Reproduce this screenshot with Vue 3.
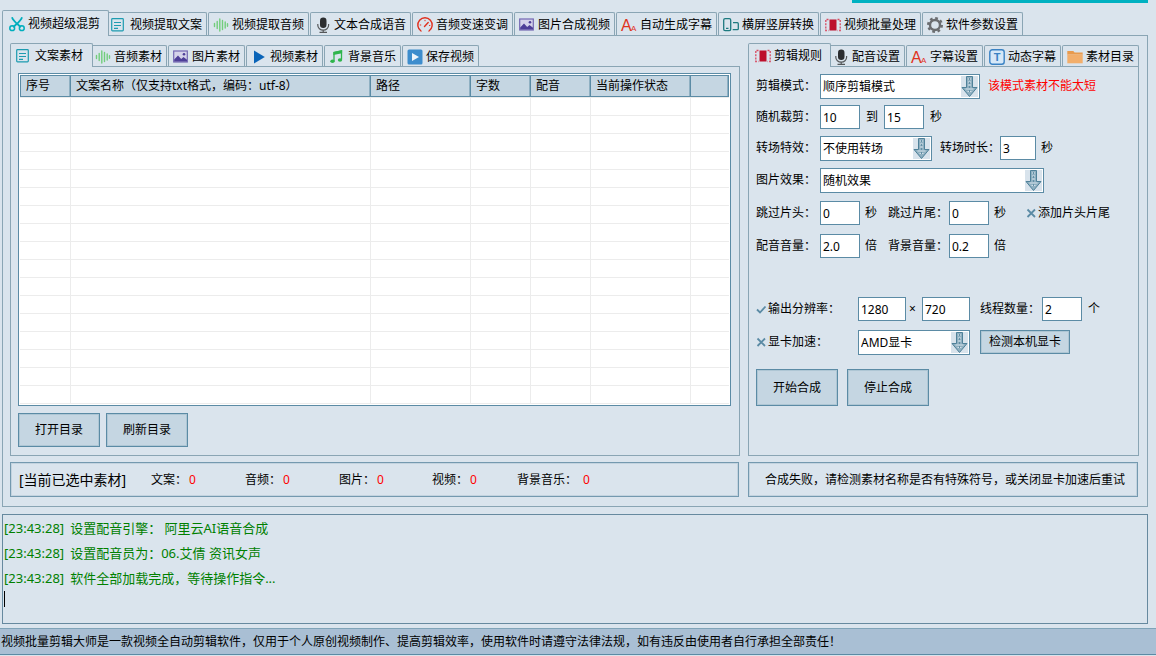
<script setup>
import { ref, reactive } from 'vue'

const icons = {
  scissors:
    '<g fill="none" stroke="#00aebd" stroke-width="1.5"><path d="M3 1.2C4 5 8 7.500 12 11.200M13 1.2C12 5 8 7.500 4 11.200" stroke-width="1.800"/><circle cx="3.200" cy="12.200" r="2.400"/><circle cx="12.800" cy="12.200" r="2.400"/></g>',
  doc:
    '<g fill="none" stroke="#1d9bb0" stroke-width="1.200"><rect x="0.700" y="1.700" width="11.600" height="12.200" rx="0.800"/><path d="M3 5.500h7M3 8.500h7M3 11.300h4"/></g>',
  wave:
    '<g stroke="#72cd7c" stroke-width="1.400" stroke-linecap="round"><path d="M1.500 6.500v3M4.200 4.500v7M6.800 2v12M9.500 3.500v9M12.200 5v6M14.500 6.800v2.400"/></g>',
  mic:
    '<rect x="5" y="0.500" width="6.500" height="10.500" rx="3.200" fill="#2b2d2f"/><path d="M2.800 7v1.200a5.400 5 0 0 0 10.800 0V7M8.200 13v2M4.500 15.300h7.500" fill="none" stroke="#55585a" stroke-width="1.200"/>',
  gauge:
    '<g fill="none" stroke="#e0301e" stroke-width="1.400" stroke-linecap="round"><path d="M4 14A7.200 7.200 0 1 1 12 14"/><path d="M7.500 9.500 11.200 5.500"/><path d="M3.200 8h.6M8 3.300v.5M12.500 8.500h.4" stroke-width="1"/></g>',
  image:
    '<rect x="0.700" y="2" width="13.600" height="11" fill="#d5d3ea" stroke="#7468b3" stroke-width="1.200"/><path d="M1.200 12.500V10.500L5 6.500l3.200 3.500 2.300-2L14 10.800v1.700z" fill="#4e3f98"/><circle cx="11" cy="5.200" r="1.300" fill="#4e3f98"/>',
  letters:
    '<g fill="#e0341f" font-family="Liberation Sans, sans-serif"><text x="0" y="14" font-size="16">A</text><text x="10" y="14" font-size="8">A</text></g>',
  rotate:
    '<g fill="none" stroke="#1d7a80" stroke-width="1.300"><rect x="0.700" y="1.600" width="7" height="12" rx="1.400"/><path d="M3 11.300h2.500M10 5.700h4.300a1 1 0 0 1 1 1v5a1 1 0 0 1-1 1H9.700"/></g>',
  film:
    '<rect x="4.500" y="2.500" width="7" height="11" fill="#bd0f2c"/><path d="M3.500 2.500H.8v11h2.700M12.500 2.500h2.700v11h-2.700" fill="none" stroke="#d84a60" stroke-width="1.300" stroke-dasharray="2 1.200"/>',
  gear:
    '<g fill="none" stroke="#6b6d70"><circle cx="8" cy="8" r="5" stroke-width="2.400"/><circle cx="8" cy="8" r="6.800" stroke-width="2.400" stroke-dasharray="2.670 2.670"/></g>',
  play: '<path d="M3 1.500 13.800 8 3 14.500z" fill="#0a64b8"/>',
  music:
    '<path d="M5 12V3.500L12.500 1.800V10.500" fill="none" stroke="#2fb54c" stroke-width="1.300"/><path d="M4.400 2.900 13.100 1.200V4.200L4.400 5.900z" fill="#2fb54c"/><ellipse cx="3.500" cy="12.200" rx="2.200" ry="1.700" fill="#2fb54c"/><ellipse cx="11" cy="11" rx="2.200" ry="1.700" fill="#2fb54c"/>',
  save:
    '<rect x="0.500" y="0.500" width="15" height="15" rx="1.500" fill="#3d8dcd"/><path d="M5 4 12 8 5 12z" fill="#eef5fb"/>',
  title:
    '<rect x="0.800" y="0.800" width="14.400" height="14.400" rx="2.500" fill="#d6e8f8" stroke="#3a82c4" stroke-width="1.400"/><text x="8" y="12" text-anchor="middle" font-size="11" font-weight="bold" font-family="Liberation Sans, sans-serif" fill="#3a82c4">T</text>',
  folder:
    '<path d="M0.300 2h6l1.300 1.600h8.100v2H.3z" fill="#e89a4d"/><path d="M0.300 5.300h15.400v9H.3z" fill="#f2ae6b"/>'
}

const mainTabs = [
  ['scissors', '视频超级混剪'],
  ['doc', '视频提取文案'],
  ['wave', '视频提取音频'],
  ['mic', '文本合成语音'],
  ['gauge', '音频变速变调'],
  ['image', '图片合成视频'],
  ['letters', '自动生成字幕'],
  ['rotate', '横屏竖屏转换'],
  ['film', '视频批量处理'],
  ['gear', '软件参数设置']
]
const materialTabs = [
  ['doc', '文案素材'],
  ['wave', '音频素材'],
  ['image', '图片素材'],
  ['play', '视频素材'],
  ['music', '背景音乐'],
  ['save', '保存视频']
]
const ruleTabs = [
  ['film', '剪辑规则'],
  ['mic', '配音设置'],
  ['letters', '字幕设置'],
  ['title', '动态字幕'],
  ['folder', '素材目录']
]
const columns = ['序号', '文案名称（仅支持txt格式，编码：utf-8）', '路径', '字数', '配音', '当前操作状态', '']
const counts = [
  ['文案：', 0],
  ['音频：', 0],
  ['图片：', 0],
  ['视频：', 0],
  ['背景音乐：', 0]
]
const logs = [
  ['[23:43:28]', '设置配音引擎： 阿里云AI语音合成'],
  ['[23:43:28]', '设置配音员为：06.艾倩 资讯女声'],
  ['[23:43:28]', '软件全部加载完成，等待操作指令...']
]

const form = reactive({
  from: '10',
  to: '15',
  duration: '3',
  head: '0',
  tail: '0',
  voice: '2.0',
  music: '0.2',
  width: '1280',
  height: '720',
  threads: '2'
})
const addClips = ref(false)
const customSize = ref(true)
const gpu = ref(false)

const arrow =
  '<rect width="17" height="21" fill="#d8e3ec"/><path d="M5.500.5h6v11H16L8.500 20.500 1 11.500h4.500z" fill="#8fb0c1" stroke="#4f8199"/><path d="M7 3h3M7 6h3M7 9h3M4.500 13h8M6.500 15.500h4" stroke="#d3e1ea"/><path d="M8.500 2v16" stroke="#628fa5" stroke-dasharray="2 2"/>'
const tick = '<path d="M1 5.500 4 8.500 9.500 2.500" fill="none" stroke="#5b8ba5" stroke-width="1.800"/>'
const cross = '<path d="M1.500 1.500 9 9M9 1.500 1.500 9" fill="none" stroke="#5b8ba5" stroke-width="1.800"/>'
</script>

<template>
  <div class="app">
    <header class="top"><div class="accent"></div></header>

    <nav class="tabs main-tabs" role="tablist">
      <button v-for="(t, i) in mainTabs" :key="t[1]" class="tab" :class="{ active: i === 0 }" role="tab" :aria-selected="i === 0">
        <svg class="icon" viewBox="0 0 16 16" aria-hidden="true" v-html="icons[t[0]]"></svg>{{ t[1] }}
      </button>
    </nav>

    <main class="workspace">
      <section class="left">
        <div class="tabs sub-tabs" role="tablist">
          <button v-for="(t, i) in materialTabs" :key="t[1]" class="tab" :class="{ active: i === 0 }" role="tab" :aria-selected="i === 0">
            <svg class="icon" viewBox="0 0 16 16" aria-hidden="true" v-html="icons[t[0]]"></svg>{{ t[1] }}
          </button>
        </div>
        <div class="panel">
          <div class="table-box">
            <table>
              <colgroup>
                <col class="c-no" /><col /><col class="c-path" /><col class="c-num" /><col class="c-num" /><col class="c-path" /><col class="c-last" />
              </colgroup>
              <thead>
                <tr><th v-for="(c, i) in columns" :key="i">{{ c }}</th></tr>
              </thead>
              <tbody>
                <tr v-for="r in 17" :key="r"><td v-for="c in 7" :key="c"></td></tr>
              </tbody>
            </table>
          </div>
          <div class="folder-actions">
            <button class="btn">打开目录</button>
            <button class="btn">刷新目录</button>
          </div>
        </div>
        <div class="status counts">
          <strong>[当前已选中素材]</strong>
          <span v-for="c in counts" :key="c[0]" class="count">{{ c[0] }}<b>{{ c[1] }}</b></span>
        </div>
      </section>

      <section class="right">
        <div class="tabs sub-tabs" role="tablist">
          <button v-for="(t, i) in ruleTabs" :key="t[1]" class="tab" :class="{ active: i === 0 }" role="tab" :aria-selected="i === 0">
            <svg class="icon" viewBox="0 0 16 16" aria-hidden="true" v-html="icons[t[0]]"></svg>{{ t[1] }}
          </button>
        </div>
        <form class="panel rules" @submit.prevent>
          <div class="group tight">
            <div class="row">
              <label class="lead" for="mode">剪辑模式：</label>
              <span class="select w160"><select id="mode"><option>顺序剪辑模式</option></select><svg viewBox="0 0 17 21" v-html="arrow"></svg></span>
              <span class="warn">该模式素材不能太短</span>
            </div>
            <div class="row">
              <label class="lead" for="from">随机裁剪：</label>
              <input id="from" v-model="form.from" class="w40" />
              <label class="mid" for="to">到</label>
              <input id="to" v-model="form.to" class="w40" />
              <span class="mid">秒</span>
            </div>
            <div class="row">
              <label class="lead" for="transition">转场特效：</label>
              <span class="select w112"><select id="transition"><option>不使用转场</option></select><svg viewBox="0 0 17 21" v-html="arrow"></svg></span>
              <label class="after" for="duration">转场时长：</label>
              <input id="duration" v-model="form.duration" class="w36" />
              <span class="unit">秒</span>
            </div>
          </div>

          <div class="group">
            <div class="row">
              <label class="lead" for="effect">图片效果：</label>
              <span class="select w224"><select id="effect"><option>随机效果</option></select><svg viewBox="0 0 17 21" v-html="arrow"></svg></span>
            </div>
            <div class="row">
              <label class="lead" for="head">跳过片头：</label>
              <input id="head" v-model="form.head" class="w40" />
              <span class="unit wide">秒</span>
              <label class="second" for="tail">跳过片尾：</label>
              <input id="tail" v-model="form.tail" class="w40" />
              <span class="unit">秒</span>
              <label class="check clips">
                <input v-model="addClips" type="checkbox" />
                <svg viewBox="0 0 11 11" v-html="addClips ? tick : cross"></svg>添加片头片尾
              </label>
            </div>
            <div class="row">
              <label class="lead" for="voice">配音音量：</label>
              <input id="voice" v-model="form.voice" class="w40" />
              <span class="unit wide">倍</span>
              <label class="second" for="bgm">背景音量：</label>
              <input id="bgm" v-model="form.music" class="w40" />
              <span class="unit">倍</span>
            </div>
          </div>

          <div class="group output">
            <div class="row">
              <label class="check lead-check">
                <input v-model="customSize" type="checkbox" />
                <svg viewBox="0 0 11 11" v-html="customSize ? tick : cross"></svg>输出分辨率：
              </label>
              <input v-model="form.width" class="w48" aria-label="宽度" />
              <span class="times">×</span>
              <input v-model="form.height" class="w48" aria-label="高度" />
              <label class="threads" for="threads">线程数量：</label>
              <input id="threads" v-model="form.threads" class="w40" />
              <span class="mid">个</span>
            </div>
            <div class="row">
              <label class="check lead-check">
                <input v-model="gpu" type="checkbox" />
                <svg viewBox="0 0 11 11" v-html="gpu ? tick : cross"></svg>显卡加速：
              </label>
              <span class="select w112"><select aria-label="显卡"><option>AMD显卡</option></select><svg viewBox="0 0 17 21" v-html="arrow"></svg></span>
              <button type="button" class="btn detect">检测本机显卡</button>
            </div>
          </div>

          <div class="run-actions">
            <button type="button" class="btn">开始合成</button>
            <button type="button" class="btn">停止合成</button>
          </div>
        </form>
        <div class="status notice">合成失败，请检测素材名称是否有特殊符号，或关闭显卡加速后重试</div>
      </section>
    </main>

    <section class="log" role="log">
      <p v-for="l in logs" :key="l[1]"><time>{{ l[0] }}</time>{{ l[1] }}</p>
      <p><span class="caret"></span></p>
    </section>

    <footer class="foot">视频批量剪辑大师是一款视频全自动剪辑软件，仅用于个人原创视频制作、提高剪辑效率，使用软件时请遵守法律法规，如有违反由使用者自行承担全部责任！</footer>
  </div>
</template>

<style>
body {
  margin: 0;
  background: #dae4ed;
}
</style>

<style scoped>
.app {
  --bg: #dae4ed;
  --line: #8aa5b4;
  --edge: #5b8ba5;
  display: flex;
  flex-direction: column;
  box-sizing: border-box;
  min-height: 100vh;
  padding-bottom: 1px;
  background: var(--bg);
  color: #000;
  font: 12px/16px "Noto Sans", "Noto Sans CJK SC", sans-serif;
}
.app *,
.app *::before {
  box-sizing: border-box;
}
button,
input,
select {
  font: inherit;
  color: inherit;
  margin: 0;
  border-radius: 0;
}
.top {
  height: 10px;
  padding: 0 8px;
}
.accent {
  width: 296px;
  height: 3px;
  margin-left: auto;
  background: #00b1c1;
}

.tabs {
  display: flex;
  align-items: flex-end;
  gap: 1px;
}
.main-tabs {
  height: 25px;
  padding-left: 2px;
}
.sub-tabs {
  height: 23px;
}
.tab {
  display: flex;
  align-items: center;
  gap: 3px;
  flex: none;
  padding: 2px 0 0 4px;
  border: 1px solid var(--line);
  border-bottom: 0;
  border-radius: 2px 2px 0 0;
  background: var(--bg);
  white-space: nowrap;
}
.main-tabs .tab {
  width: 101px;
  height: 23px;
}
.sub-tabs .tab {
  width: 77px;
  height: 21px;
}
.tab.active {
  position: relative;
  z-index: 1;
  margin: 0 -4px -1px 0;
  padding: 0 0 0 6px;
}
.main-tabs .tab.active {
  width: 107px;
  height: 26px;
}
.sub-tabs .tab.active {
  width: 83px;
  height: 24px;
}
.left .tab.active {
  padding-left: 5px;
}
.icon {
  flex: none;
  width: 16px;
  height: 16px;
  overflow: visible;
}

.workspace {
  display: flex;
  gap: 8px;
  margin: 0 8px 7px 2px;
  padding: 7px 8px 9px 7px;
  border: 1px solid var(--line);
}
.left {
  display: flex;
  flex-direction: column;
  flex: 1;
  min-width: 0;
}
.right {
  display: flex;
  flex-direction: column;
  flex: 0 0 390px;
}
.panel {
  flex: 1;
  padding: 6px 8px 8px 7px;
  border: 1px solid var(--line);
}

.table-box {
  padding: 1px;
  border: 1px solid var(--edge);
  background: #fff;
}
table {
  width: 100%;
  table-layout: fixed;
  border-collapse: separate;
  border-spacing: 0;
}
.c-no {
  width: 51px;
}
.c-path {
  width: 100px;
}
.c-num {
  width: 60px;
}
.c-last {
  width: 38px;
}
th {
  height: 22px;
  padding: 0 0 0 5px;
  border: solid var(--edge);
  border-width: 1px 1px 1px 0;
  background: #c5d6e2;
  box-shadow: inset -1px 0 #8fb0c2;
  font-weight: normal;
  text-align: left;
  white-space: nowrap;
}
th:first-child {
  border-left-width: 1px;
}
td {
  height: 18px;
  padding: 0;
  border-top: 1px solid #ececec;
  border-right: 1px solid #ececec;
}
td:last-child {
  border-right: 0;
}
tr:last-child td {
  height: 19px;
  border-bottom: 1px solid #ececec;
}

.btn {
  padding: 0;
  border: 1px solid var(--edge);
  background: #c5d6e2;
  box-shadow: inset 0 0 0 1px #aec6d4;
  text-align: center;
}
.folder-actions {
  display: flex;
  gap: 6px;
  margin-top: 7px;
}
.folder-actions .btn {
  width: 82px;
  height: 34px;
}
.status {
  display: flex;
  align-items: center;
  height: 35px;
  margin-top: 6px;
  border: 1px solid #7499af;
  box-shadow: inset 0 0 0 1px #c3d3df;
}
.counts {
  display: grid;
  grid-template-columns: 132px 94px 94px 93px 85px auto;
  margin-right: 1px;
  padding-left: 8px;
}
.counts strong {
  font-size: 14px;
  font-weight: normal;
}
.count {
  display: flex;
  gap: 2px;
}
.count:last-child {
  gap: 6px;
}
.count b {
  font-weight: normal;
  color: #f00;
}
.notice {
  margin-right: 1px;
  padding-left: 16px;
  white-space: nowrap;
}

.rules {
  padding-top: 7px;
}
.group {
  display: flex;
  flex-direction: column;
  gap: 9px;
}
.group.tight {
  gap: 7px;
  margin-bottom: 8px;
}
.group.output {
  margin-top: 39px;
}
.row {
  display: flex;
  align-items: center;
  height: 24px;
  white-space: nowrap;
}
.row > input {
  height: 24px;
  padding: 0 2px;
  border: 1px solid var(--edge);
  background: #fff;
}
.lead {
  width: 64px;
}
.second {
  width: 61px;
}
.mid {
  margin: 0 6px;
}
.after {
  width: 68px;
  padding-left: 8px;
}
.unit {
  padding-left: 5px;
}
.unit.wide {
  width: 28px;
}
.times {
  width: 16px;
  padding-left: 3px;
}
.threads {
  width: 72px;
  padding-left: 10px;
}
.w36 {
  width: 36px;
}
.w40 {
  width: 40px;
}
.w48 {
  width: 48px;
}
.w112 {
  width: 112px;
}
.w160 {
  width: 160px;
}
.w224 {
  width: 224px;
}
.select {
  position: relative;
  align-self: flex-start;
  height: 25px;
}
.select select {
  width: 100%;
  height: 100%;
  padding: 0 20px 0 2px;
  border: 1px solid var(--edge);
  background: #fff;
  appearance: none;
}
.select svg {
  position: absolute;
  top: 2px;
  right: 2px;
  width: 17px;
  height: 21px;
  pointer-events: none;
}
.warn {
  margin-left: 8px;
  color: #f00;
}
.check {
  position: relative;
  display: flex;
  align-items: center;
  gap: 1px;
}
.check input {
  position: absolute;
  opacity: 0;
}
.check svg {
  width: 11px;
  height: 11px;
}
.clips {
  margin-left: 20px;
}
.lead-check {
  width: 102px;
}
.detect {
  width: 90px;
  height: 24px;
  margin-left: 10px;
}
.run-actions {
  display: flex;
  gap: 9px;
  margin-top: 15px;
}
.run-actions .btn {
  width: 82px;
  height: 37px;
}

.log {
  flex: 1;
  margin: 0 8px 4px 2px;
  padding: 1px;
  border: 1px solid #66899f;
  color: #008000;
  font-size: 13px;
  line-height: 25px;
}
.log p {
  height: 25px;
  margin: 0;
}
.log time {
  margin-right: 6px;
}
.caret {
  display: block;
  width: 1px;
  height: 16px;
  background: #000;
}
.foot {
  height: 27px;
  padding-left: 1px;
  border-top: 1px solid #7fa3b8;
  border-bottom: 1px solid var(--edge);
  background: #a9bfd4;
  line-height: 25px;
  white-space: nowrap;
  overflow: hidden;
}
</style>
